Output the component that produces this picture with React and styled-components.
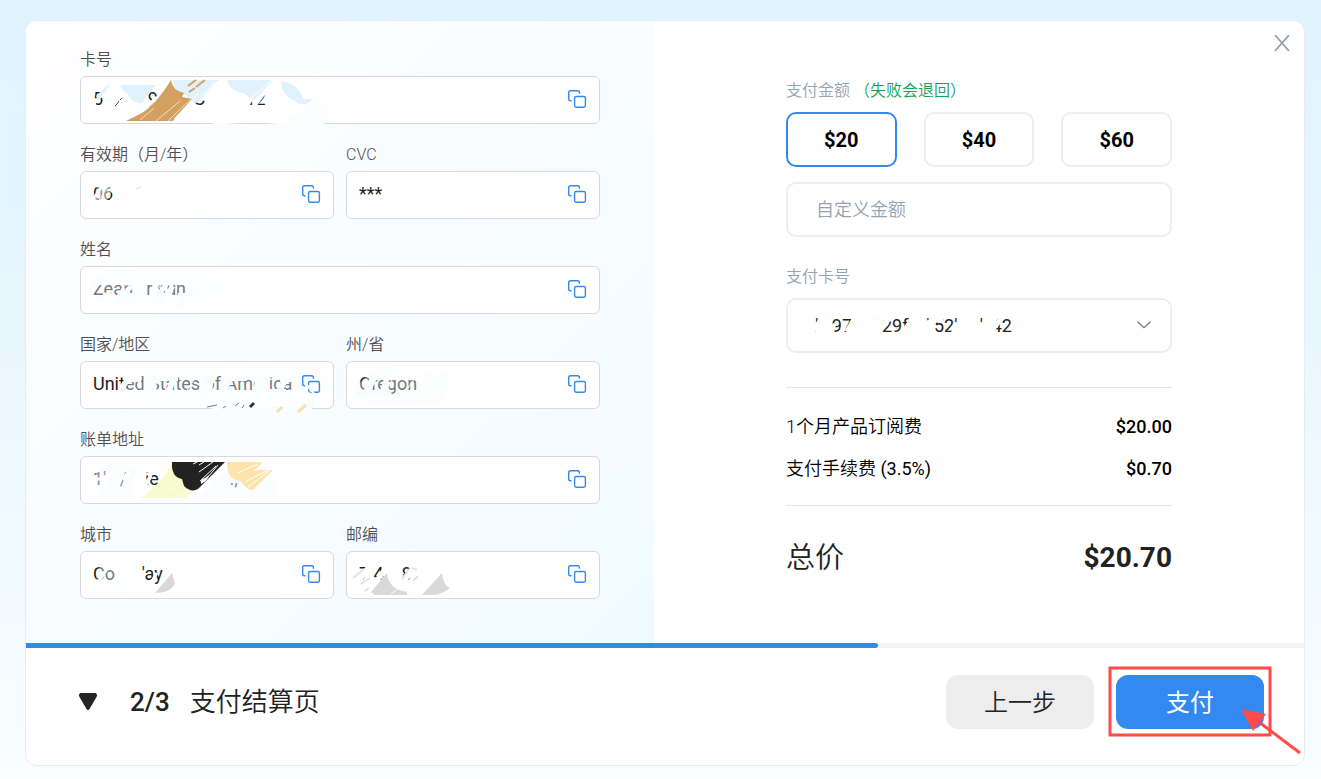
import { useState } from 'react';

import styled, { createGlobalStyle } from 'styled-components';

const BLUE = '#3289f0';

const gap = (count) => '\u00a0'.repeat(count);

const GlobalStyle = createGlobalStyle`
  * {
    box-sizing: border-box;
  }

  body {
    margin: 0;
    font-family: Roboto, 'Noto Sans CJK SC', sans-serif;
    color: #222;
  }

  button,
  input,
  select {
    margin: 0;
    font-family: inherit;
    color: inherit;
  }

  button {
    cursor: pointer;
  }
`;

const CopyIcon = () => (
  <svg width="20" height="20" fill="none" stroke={BLUE} strokeWidth="1.4">
    <path d="M4.5 11.7H3.5a1.8 1.8 0 0 1-1.8-1.8V3.500A1.8 1.8 0 0 1 3.500 1.700h7.1a1.8 1.8 0 0 1 1.8 1.8v1.300" />
    <rect x="7.6" y="7.5" width="10.8" height="10.7" rx="1.6" />
  </svg>
);

const CardNumberArt = () => (
  <>
    <g stroke="#fff" strokeLinecap="round">
      <path strokeWidth="5" d="M20 36 32 14M78 38 98 10M122 36 140 12M63 36 76 23" />
      <path strokeWidth="3" d="M12 30 26 14M172 34 188 12M116 20h12" />
      <path strokeWidth="6" d="M166 15h28M168 26l6-8" />
    </g>
    <g stroke="#555" strokeWidth="1">
      <path d="m35 30 2-2m3-4 2-2m64 7 3-6m-72 5 2-3" />
    </g>
    <g fill="#e0f2fe">
      <path d="M40 9h36L62 27q-12 0-15-10-5-1-7-8Z" />
      <path d="M16 20 28 9h2L18 25Z" />
      <path d="M93 4h46L118 27q-10-1-12-8-10 0-13-15Z" />
      <path d="M147 4h46l-18 20q-6-1-9-6-16-2-19-14Z" />
      <path d="M201 5q17 2 22 18h10q-9 10-20 1-12-6-12-19Z" />
    </g>
    <path fill="#d3a062" d="M91 4q2 11 13 13l-2 4 10 2-19 22H46l14-7q15-8 31-34Z" />
    <path stroke="#d3a062" strokeWidth="2" d="m108 10 8-6m0 7 9-7m-16 12 6-4" />
    <g stroke="#f1dec7" strokeWidth="1">
      <path d="m60 44 14-12m2 13 24-20m-12 20 24-23m-43 9 5-5" />
    </g>
    <g stroke="#fff" strokeWidth="1">
      <path d="m94 43 24-25m4 2 15-15m-6 4 12-5m26 20 25-22m-18 21 20-20" />
    </g>
    <path fill="#fbfdff" d="M133 46q56 5 72-1 20-18 38-20 8 9 2 22-5 9-18 8-8-5-22-6-39 1-72-1Z" />
  </>
);

const ExpiryArt = () => (
  <>
    <path stroke="#fff" strokeWidth="3" d="m12 30 10-15m7 17L40 19" />
    <path stroke="#fff" strokeWidth="1" d="m18 31 10-16" />
    <path fill="#fcfeff" d="M14 15q8-8 26-5l-9 12q-4 12-14 9-7-6 4-12Z" opacity=".5" />
    <path stroke="#d9dfe5" d="m56 18 5-2" />
  </>
);

const NameArt = () => (
  <>
    <path fill="#f9fcff" opacity=".4" d="M8 24Q9 7 23 5q24-5 51 0l40-2q24 6 29 18 0 17-19 22-25 3-34-2-38 6-68 1Q6 40 8 24Z" />
    <g stroke="#fafdff">
      <path strokeWidth="5" d="M10 26 22 12m-3 22 12-8m8 10 12-16m-4 18 15-17m11 16 14-20m-8 20 14-17m6 20 12-18" />
      <path strokeWidth="4" d="M12 17h12M36 34l8-12M44 29h18M78 29h14M98 29h20" />
    </g>
    <g stroke="#fff" strokeWidth="1">
      <path d="m30 40 22-30m12 30L90 8m14 32 26-31" />
    </g>
  </>
);

const CountryArt = () => (
  <>
    <path fill="#f7fcff" opacity=".4" d="M46 36q0-22 22-26 24-3 35 4 12-10 34-8 15 2 18 9 14-13 32-10 18 5 20 14l30 16-8 14q-35-5-57-4-70 4-117-1Q46 43 46 36Z" />
    <g stroke="#fafdff">
      <path strokeWidth="6" d="m41 28 8-11m18 16V19m21 14 6-17m28 17 5-17m16 17 6-17m26 17 4-16m3 16 6-16m10 16 8-16" />
      <path strokeWidth="9" d="M72 33V15m55 18 3-18m51 18V15" />
      <path strokeWidth="4" d="M47 19h14M72 18h26M150 18h16M190 30h16M200 19h12" />
    </g>
    <g stroke="#fff" strokeWidth="1">
      <path d="M64 37 80 12m18 30 23-33m17 31 22-31m14 30 22-29" />
    </g>
    <path fill="#f8fcff" d="m225 24 7 8 1 5q-12 2-13 9h-92q15 8 40 4l62-1q9-7 2-25Z" />
    <g stroke="#777" strokeWidth="1">
      <path d="m143 47 3-2m16 2 2-3m-37 2 10-2m18 1 4-3" />
    </g>
    <path stroke="#333" strokeWidth="3" d="m170 46 4-4" />
    <path stroke="#f8dfad" strokeWidth="3" d="m197 51 5-5m16 5 8-7" />
  </>
);

const StateArt = () => (
  <>
    <path fill="#f6fbff" d="M9 32q1-10 9-13 5-12 18-11 15-3 23 6l15 7q10-13 16-13 15 3 14 16-5 14-15 18H25q-12-2-16-10Z" opacity=".4" />
    <g stroke="#f8fcff">
      <path strokeWidth="7" d="m18 36 10-20m8 18 5-14" />
      <path strokeWidth="4" d="M12 33h22M44 34l-4-8" />
    </g>
    <path stroke="#fff" strokeWidth="1" d="m31 41 17-25m5 24 18-26" />
  </>
);

const AddressArt = () => (
  <>
    <path fill="#f6fbff" opacity=".5" d="M14 23q2-15 25-17l18 8-7 26H29q-14-4-15-17ZM117 41l42-36q25 0 28 10 11 8 9 17-6 11-18 11-11-2-25-1Z" />
    <g stroke="#fff" strokeWidth="4">
      <path d="m20 33 10-17m13 8 6-8m14 16 8-12" />
      <path strokeWidth="3" d="M12 23h8M58 18h14" />
    </g>
    <path fill="#f7fbcd" d="M60 43q19-13 31-34 7 13 15 12l11 11-12 10H60Z" />
    <path stroke="#fff" strokeWidth="1" d="m81 42 18-16m-4 16 22-12" />
    <path fill="#222" d="M92 6h53l-27 27q-7 4-14-3l-2-7q-11-2-10-17Z" />
    <g stroke="#fff" strokeWidth="1">
      <path d="m119 9 5-3m-5 10 14-10m-13 19 16-15m-12 16 14-17m-25-1 8-4" />
    </g>
    <path fill="#fff" d="M121 28q-1-5 4-6l4-3q0 4-8 9Z" />
    <path fill="#fee4aa" d="M147 6h35q-2 5-10 9 9-2 21-1l-20 20q-7 0-12-9-14 0-14-19Z" />
    <path stroke="#fff" strokeWidth="1" d="m158 17 20-9m-13 18 23-12m-20 17 22-17" />
  </>
);

const CityArt = () => (
  <>
    <path fill="#f7fcff" d="M16 23Q22 7 43 6l-6 11q-7 6 6 14l9 11q-23 0-34-5Z" opacity=".4" />
    <g stroke="#fff" strokeWidth="3">
      <path d="m17 33 12-18m3 19 10-17m26 19 9-14" />
    </g>
    <path fill="#d9d9d9" d="m75 42 17-20q2 7 3 11-5 9-20 9Z" />
  </>
);

const ZipArt = () => (
  <>
    <g stroke="#fff" strokeWidth="5">
      <path d="m10 35 13-20m4 20 12-17m17 16 10-16" />
      <path strokeWidth="3" d="m20 32 9-14M56 26h15M55 31h14" />
    </g>
    <g stroke="#e3e3e3" strokeWidth="2">
      <path d="m7 27 11-9m-3 15 9-6m-5 13 4-3m33-9 7-10m4 12 5-5m-6-8 5 2" />
    </g>
    <g fill="#d9d9d9">
      <path d="M25 41 41 22q1 16 20 19v3H29Z" />
      <path d="m76 44 20-22q1 12 8 15-9 8-22 7Z" />
    </g>
    <path stroke="#fff" strokeWidth="1" d="m45 43 10-8" />
  </>
);

const SelectArt = () => (
  <g stroke="#fff">
    <path strokeWidth="5" d="m26 36 14-18m22 17 10-18m11 18 12-16m22 17 14-18m4 20 10-14m22 14 12-17m24 17 14-17m20 17 12-17" />
    <path strokeWidth="4" d="M44 20h6M96 21h10M148 21h10M208 20h8M46 33l4-6m48-1 8-4m44 2 8-2" />
  </g>
);

const fields = [
  { id: 'card', label: '卡号', wide: true, value: `5${gap(10)}9${gap(8)}C${gap(9)}12`, Art: CardNumberArt },
  { id: 'expiry', label: '有效期（月/年）', value: '06', Art: ExpiryArt },
  { id: 'cvc', label: 'CVC', value: '***' },
  { id: 'name', label: '姓名', wide: true, value: `Zean${gap(3)}r${gap(1)}sun`, Art: NameArt },
  { id: 'country', label: '国家/地区', value: 'United States of America', Art: CountryArt },
  { id: 'state', label: '州/省', value: 'Oregon', Art: StateArt },
  { id: 'address', label: '账单地址', wide: true, value: `1'${gap(3)}/${gap(4)}ie${gap(4)},${gap(11)}.,`, Art: AddressArt },
  { id: 'city', label: '城市', value: `Co${gap(6)}'ay`, Art: CityArt },
  { id: 'zip', label: '邮编', value: `7 4${gap(4)}8`, Art: ZipArt },
];

const amounts = [20, 40, 60];

const App = () => {
  const [amount, setAmount] = useState(20);

  return (
    <Page>
      <GlobalStyle />
      <Dialog>
        <CloseButton type="button" aria-label="关闭">
          <svg width="16" height="16" fill="none" stroke="#8d9eae" strokeWidth="1.7">
            <path d="m1 0 14 16M15 0 1 16" />
          </svg>
        </CloseButton>
        <Panes>
          <BillingPane>
            {fields.map(({ id, label, wide, value, Art }) => (
              <Field key={id} $wide={wide}>
                <FieldLabel htmlFor={id}>{label}</FieldLabel>
                <FieldBox>
                  <FieldInput id={id} defaultValue={value} readOnly />
                  <CopyButton type="button" aria-label={`复制${label}`}>
                    <CopyIcon />
                  </CopyButton>
                  {Art && (
                    <Smudge>
                      <Art />
                    </Smudge>
                  )}
                </FieldBox>
              </Field>
            ))}
          </BillingPane>
          <PaymentPane>
            <Payment>
              <PaymentLabel as="div">
                支付金额 <Hint>（失败会退回）</Hint>
              </PaymentLabel>
              <AmountList>
                {amounts.map((item) => (
                  <AmountButton
                    key={item}
                    type="button"
                    $active={item === amount}
                    onClick={() => setAmount(item)}
                  >
                    ${item}
                  </AmountButton>
                ))}
              </AmountList>
              <CustomAmount placeholder="自定义金额" aria-label="自定义金额" />
              <PaymentLabel htmlFor="pay-card">支付卡号</PaymentLabel>
              <SelectBox>
                <CardSelect id="pay-card">
                  <option>
                    {`.'${gap(3)}97${gap(5)}'${gap(1)}29f${gap(4)}'${gap(1)}52'${gap(5)}'${gap(2)}42`}
                  </option>
                </CardSelect>
                <Smudge>
                  <SelectArt />
                </Smudge>
                <Chevron width="14" height="8" fill="none" stroke="#777" strokeWidth="1.2">
                  <path d="m.5.8 6.500 6 6.500-6" />
                </Chevron>
              </SelectBox>
              <Costs>
                <CostRow>
                  <span>1个月产品订阅费</span>
                  <Price>$20.00</Price>
                </CostRow>
                <CostRow>
                  <span>
                    支付手续费 <Rate>(3.5%)</Rate>
                  </span>
                  <Price>$0.70</Price>
                </CostRow>
              </Costs>
              <Total>
                <span>总价</span>
                <TotalPrice>$20.70</TotalPrice>
              </Total>
            </Payment>
          </PaymentPane>
        </Panes>
        <ProgressTrack>
          <ProgressValue />
        </ProgressTrack>
        <Footer>
          <svg width="20" height="18" fill="#252525">
            <path d="M2.5 0h15q2.500 1.500 1 4l-7 12q-1.500 2-3 0l-7-12Q0 1.500 2.500 0Z" />
          </svg>
          <Step>2/3</Step>
          <StepTitle>支付结算页</StepTitle>
          <Actions>
            <ActionButton type="button">上一步</ActionButton>
            <PayWrap>
              <ActionButton type="button" $primary>
                支付
              </ActionButton>
              <Marker width="148" height="54" fill="none" stroke="#ff4b4b" strokeWidth="3">
                <rect x="-6" y="-7" width="160" height="67" />
                <path d="m143 47 41 31" />
                <path fill="#ff4b4b" stroke="none" d="m125 34 25 5-13 17Z" />
              </Marker>
            </PayWrap>
          </Actions>
        </Footer>
      </Dialog>
    </Page>
  );
};

const Page = styled.main`
  min-height: 100vh;
  padding: 20px 16px 13px 25px;
  background: linear-gradient(#e0f3ff, #e7f6ff 35%, #f9fdff);
`;

const Dialog = styled.section`
  position: relative;
  overflow: hidden;
  border: 1px solid #e9ecee;
  border-radius: 12px;
  background: #fff;
`;

const CloseButton = styled.button`
  position: absolute;
  top: 14px;
  right: 14px;
  display: flex;
  padding: 0;
  border: 0;
  background: none;
`;

const Panes = styled.div`
  display: grid;
  grid-template-columns: 628fr 650fr;
`;

const BillingPane = styled.div`
  display: grid;
  grid-template-columns: 1fr 1fr;
  gap: 18px 12px;
  padding: 26px 54px 44px;
  background: linear-gradient(135deg, #fefeff, #f8fcff 50%, #f1fbff);
`;

const Field = styled.div`
  grid-column: ${({ $wide }) => ($wide ? 'span 2' : 'auto')};
  min-width: 0;
`;

const FieldLabel = styled.label`
  display: block;
  margin-bottom: 3px;
  font-size: 16px;
  font-weight: 350;
  line-height: 26px;
  color: #505050;
`;

const FieldBox = styled.div`
  position: relative;
  display: flex;
  align-items: center;
  height: 48px;
  padding: 0 12px 2px;
  border: 1px solid #d9d9d9;
  border-radius: 6px;
  background: #fff;
`;

const FieldInput = styled.input`
  flex: 1;
  min-width: 0;
  padding: 0;
  border: 0;
  outline: 0;
  background: none;
  font-size: 18px;
  line-height: 24px;
`;

const CopyButton = styled.button`
  display: flex;
  padding: 0;
  border: 0;
  background: none;
`;

const Smudge = styled.svg.attrs({ 'aria-hidden': true, fill: 'none' })`
  position: absolute;
  top: -1px;
  left: -1px;
  width: 254px;
  height: 48px;
  overflow: visible;
  pointer-events: none;
`;

const PaymentPane = styled.div`
  display: flex;
  justify-content: center;
  padding: 57px 24px 0;
`;

const Payment = styled.div`
  flex: 0 1 386px;
  min-width: 0;
`;

const PaymentLabel = styled.label`
  display: block;
  margin-bottom: 8px;
  font-size: 16px;
  font-weight: 350;
  line-height: 26px;
  color: #94a3b3;
`;

const Hint = styled.span`
  color: #0fa35b;
`;

const AmountList = styled.div`
  display: grid;
  grid-template-columns: repeat(3, 1fr);
  gap: 27px;
`;

const AmountButton = styled.button`
  height: 55px;
  border: 2px solid ${({ $active }) => ($active ? BLUE : '#eee')};
  border-radius: 10px;
  background: #fff;
  font-size: 20px;
  font-weight: 700;
  color: #000;
`;

const CustomAmount = styled.input`
  display: block;
  width: 100%;
  height: 55px;
  margin: 15px 0 27px;
  padding: 0 28px;
  border: 2px solid #eee;
  border-radius: 10px;
  font-size: 18px;
  font-weight: 350;

  &::placeholder {
    color: #94a3b3;
  }
`;

const SelectBox = styled.div`
  position: relative;
`;

const CardSelect = styled.select`
  display: block;
  width: 100%;
  height: 55px;
  padding: 0 24px;
  border: 2px solid #eee;
  border-radius: 10px;
  appearance: none;
  background: #fff;
  font-size: 18px;
`;

const Chevron = styled.svg`
  position: absolute;
  top: 23px;
  right: 21px;
  pointer-events: none;
`;

const Costs = styled.div`
  display: grid;
  gap: 18px;
  margin-top: 34px;
  padding: 27px 0 24px;
  border-top: 1px solid #e5e5e5;
  border-bottom: 1px solid #e5e5e5;
  color: #000;
`;

const CostRow = styled.div`
  display: flex;
  justify-content: space-between;
  font-size: 18px;
  font-weight: 350;
  line-height: 24px;
`;

const Rate = styled.span`
  font-weight: 400;
`;

const Price = styled.span`
  font-weight: 500;
`;

const Total = styled.div`
  display: flex;
  justify-content: space-between;
  padding-top: 32px;
  font-size: 29px;
  font-weight: 350;
  line-height: 40px;
`;

const TotalPrice = styled.strong`
  font-size: 28px;
  font-weight: 700;
`;

const ProgressTrack = styled.div`
  height: 5px;
  background: #f4f4f4;
`;

const ProgressValue = styled.div`
  width: calc(100% * 2 / 3);
  height: 100%;
  border-radius: 0 3px 3px 0;
  background: ${BLUE};
`;

const Footer = styled.footer`
  display: flex;
  align-items: center;
  padding: 27px 40px 36px 52px;
  font-size: 26px;
  line-height: 36px;
`;

const Step = styled.span`
  margin: 0 20px 0 32px;
  font-weight: 500;
`;

const StepTitle = styled.span`
  font-weight: 350;
`;

const Actions = styled.div`
  display: flex;
  gap: 22px;
  margin-left: auto;
`;

const ActionButton = styled.button`
  width: 148px;
  height: 54px;
  padding: 0 0 4px;
  border: 0;
  border-radius: 12px;
  background: ${({ $primary }) => ($primary ? BLUE : '#ededed')};
  font-size: 24px;
  font-weight: ${({ $primary }) => ($primary ? 400 : 350)};
  color: ${({ $primary }) => ($primary ? '#fff' : '#222')};
`;

const PayWrap = styled.div`
  position: relative;
`;

const Marker = styled.svg`
  position: absolute;
  top: 0;
  left: 0;
  overflow: visible;
  pointer-events: none;
`;

export default App;
